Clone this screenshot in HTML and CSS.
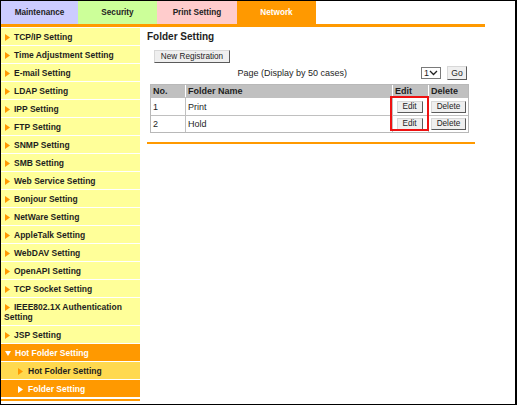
FILE: index.html
```html
<!DOCTYPE html>
<html>
<head>
<meta charset="utf-8">
<link rel="stylesheet" href="styles.css">
</head>
<body>
<div class="frame">
  <div class="tabs">
    <div class="tab t-maint">Maintenance</div>
    <div class="tab t-sec">Security</div>
    <div class="tab t-print">Print Setting</div>
    <div class="tab t-net">Network</div>
  </div>
  <div class="tabbar"></div>
  <div class="main">
    <nav class="side">
      <div class="item"><svg class="arr" width="5" height="7" viewBox="0 0 5 7"><polygon points="0,0 5,3.5 0,7"/></svg>TCP/IP Setting</div>
      <div class="item"><svg class="arr" width="5" height="7" viewBox="0 0 5 7"><polygon points="0,0 5,3.5 0,7"/></svg>Time Adjustment Setting</div>
      <div class="item"><svg class="arr" width="5" height="7" viewBox="0 0 5 7"><polygon points="0,0 5,3.5 0,7"/></svg>E-mail Setting</div>
      <div class="item"><svg class="arr" width="5" height="7" viewBox="0 0 5 7"><polygon points="0,0 5,3.5 0,7"/></svg>LDAP Setting</div>
      <div class="item"><svg class="arr" width="5" height="7" viewBox="0 0 5 7"><polygon points="0,0 5,3.5 0,7"/></svg>IPP Setting</div>
      <div class="item"><svg class="arr" width="5" height="7" viewBox="0 0 5 7"><polygon points="0,0 5,3.5 0,7"/></svg>FTP Setting</div>
      <div class="item"><svg class="arr" width="5" height="7" viewBox="0 0 5 7"><polygon points="0,0 5,3.5 0,7"/></svg>SNMP Setting</div>
      <div class="item"><svg class="arr" width="5" height="7" viewBox="0 0 5 7"><polygon points="0,0 5,3.5 0,7"/></svg>SMB Setting</div>
      <div class="item"><svg class="arr" width="5" height="7" viewBox="0 0 5 7"><polygon points="0,0 5,3.5 0,7"/></svg>Web Service Setting</div>
      <div class="item"><svg class="arr" width="5" height="7" viewBox="0 0 5 7"><polygon points="0,0 5,3.5 0,7"/></svg>Bonjour Setting</div>
      <div class="item"><svg class="arr" width="5" height="7" viewBox="0 0 5 7"><polygon points="0,0 5,3.5 0,7"/></svg>NetWare Setting</div>
      <div class="item"><svg class="arr" width="5" height="7" viewBox="0 0 5 7"><polygon points="0,0 5,3.5 0,7"/></svg>AppleTalk Setting</div>
      <div class="item"><svg class="arr" width="5" height="7" viewBox="0 0 5 7"><polygon points="0,0 5,3.5 0,7"/></svg>WebDAV Setting</div>
      <div class="item"><svg class="arr" width="5" height="7" viewBox="0 0 5 7"><polygon points="0,0 5,3.5 0,7"/></svg>OpenAPI Setting</div>
      <div class="item"><svg class="arr" width="5" height="7" viewBox="0 0 5 7"><polygon points="0,0 5,3.5 0,7"/></svg>TCP Socket Setting</div>
      <div class="item"><svg class="arr" width="5" height="7" viewBox="0 0 5 7"><polygon points="0,0 5,3.5 0,7"/></svg>IEEE802.1X Authentication Setting</div>
      <div class="item"><svg class="arr" width="5" height="7" viewBox="0 0 5 7"><polygon points="0,0 5,3.5 0,7"/></svg>JSP Setting</div>
      <div class="item open"><svg class="arr down" width="6" height="5" viewBox="0 0 6 5"><polygon points="0,0 6,0 3,5"/></svg>Hot Folder Setting</div>
      <div class="item sub"><svg class="arr" width="5" height="7" viewBox="0 0 5 7"><polygon points="0,0 5,3.5 0,7"/></svg>Hot Folder Setting</div>
      <div class="item sub current"><svg class="arr" width="5" height="7" viewBox="0 0 5 7"><polygon points="0,0 5,3.5 0,7"/></svg>Folder Setting</div>
      <div class="side-end"></div>
    </nav>
    <section class="content">
      <h1 class="title">Folder Setting</h1>
      <button class="btn newreg">New Registration</button>
      <div class="pagerow">
        <span class="pagetext">Page (Display by 50 cases)</span>
        <span class="sel">1<svg width="9" height="6" viewBox="0 0 9 6"><polyline points="1,1 4.5,4.5 8,1"/></svg></span>
        <button class="btn go">Go</button>
      </div>
      <div class="tablewrap">
        <table class="list">
          <colgroup>
            <col class="c-no"><col class="c-name"><col class="c-edit"><col class="c-del">
          </colgroup>
          <thead>
            <tr><th>No.</th><th>Folder Name</th><th>Edit</th><th class="last">Delete</th></tr>
          </thead>
          <tbody>
            <tr class="r1"><td>1</td><td>Print</td><td class="bc"><button class="btn cellbtn edit">Edit</button></td><td class="bc last"><button class="btn cellbtn del">Delete</button></td></tr>
            <tr class="r2"><td>2</td><td>Hold</td><td class="bc"><button class="btn cellbtn edit">Edit</button></td><td class="bc last"><button class="btn cellbtn del">Delete</button></td></tr>
          </tbody>
        </table>
        <div class="redbox"></div>
      </div>
      <div class="endline"></div>
    </section>
  </div>
</div>
</body>
</html>
```

FILE: styles.css
```css
* { box-sizing: border-box; }
html, body { margin: 0; padding: 0; background: #fff; }
body { font-family: "Liberation Sans", Arial, sans-serif; color: #1e1e1e; }

.frame {
  width: 517px;
  height: 405px;
  border-style: solid;
  border-color: #000;
  border-width: 1px 2px 1px 1px;
  overflow: hidden;
  background: #fff;
}

.tabs { display: flex; height: 23px; }
.tab {
  display: flex;
  align-items: center;
  justify-content: center;
  font-size: 8.2px;
  font-weight: bold;
  color: #222;
}
.t-maint { width: 77px; background: #ccccff; }
.t-sec { width: 79px; background: #ccff99; }
.t-print { width: 80px; background: #ffcccc; }
.t-net { width: 79px; background: #ff9900; color: #fff; }
.tabbar { width: 484px; height: 3px; background: #ff9900; }

.main { display: flex; align-items: flex-start; }

.side { width: 139px; padding-top: 1px; flex: none; }
.item {
  background: #ffff99;
  font-size: 8.5px;
  font-weight: bold;
  line-height: 10px;
  padding: 4px 2px 3px 3px;
  margin-bottom: 1px;
  color: #1e1e1e;
}
.arr { fill: #ff9900; margin: 0 4px 0 1px; vertical-align: -0.5px; }
.arr.down { fill: #fff; margin: 0 4px 0 1px; vertical-align: 0.5px; }
.item.open { background: #ff9900; color: #fff; }
.item.sub { background: #ffd94f; padding-left: 16px; }
.item.sub .arr { margin-right: 5px; }
.item.sub.current { background: #ff9900; color: #fff; }
.item.sub.current .arr { fill: #fff; }
.side-end { height: 2px; margin-top: 2px; background: #ff9900; }

.content { flex: none; width: 335px; padding: 3px 0 0 7px; }
.title {
  margin: 0;
  font-size: 10px;
  font-weight: bold;
  line-height: 14px;
  color: #1e1e1e;
}

.btn {
  font-family: "Liberation Sans", Arial, sans-serif;
  font-size: 8.2px;
  color: #1e1e1e;
  background: #efefef;
  border: 1px solid;
  border-color: #d8d8d8 #5a5a5a #5a5a5a #d8d8d8;
  padding: 0;
  margin: 0;
  line-height: 10px;
}
.newreg { display: block; margin: 6px 0 0 7px; width: 76px; height: 13px; }

.pagerow {
  display: flex;
  align-items: center;
  justify-content: flex-end;
  width: 320px;
  height: 14px;
  margin-top: 3px;
  font-size: 9px;
}
.pagetext { margin-right: 74px; }
.sel {
  display: flex;
  align-items: center;
  justify-content: space-between;
  width: 20px;
  height: 12px;
  border: 1px solid #7a7a7a;
  background: #fff;
  padding: 0 2px 0 2px;
  font-size: 9px;
}
.sel svg { fill: none; stroke: #222; stroke-width: 1.3; }
.go { width: 20px; height: 14px; margin-left: 6px; font-size: 8.6px; }

.tablewrap { position: relative; width: 317px; margin: 4px 0 0 3px; }
.list {
  width: 317px;
  table-layout: fixed;
  border-collapse: separate;
  border-spacing: 0;
  border: 1px solid #b8b8b8;
  font-size: 9px;
}
.c-no { width: 35px; }
.c-name { width: 207px; }
.c-edit { width: 36px; }
.c-del { width: 39px; }
.list th {
  background: #c0c0c0;
  font-weight: bold;
  text-align: left;
  height: 12px;
  padding: 0 2px;
  border-right: 1px solid #fff;
  line-height: 10px;
}
.list th.last { border-right: none; }
.list td {
  height: 18px;
  padding: 0 2px;
  border-top: 1px solid #c0c0c0;
  border-right: 1px solid #c0c0c0;
  line-height: 10px;
}
.list tr.r2 td { height: 17px; }
.list td.last { border-right: none; }
.list td.bc { padding: 0; text-align: center; }
.cellbtn { height: 12px; vertical-align: middle; }
.edit { width: 26px; margin-right: 2px; }
.del { width: 35px; }

.redbox {
  position: absolute;
  left: 240px;
  top: 12px;
  width: 39px;
  height: 35px;
  border: 2px solid #ee1111;
}

.endline { width: 328px; height: 2px; margin-top: 9px; background: #ff9900; }
```
